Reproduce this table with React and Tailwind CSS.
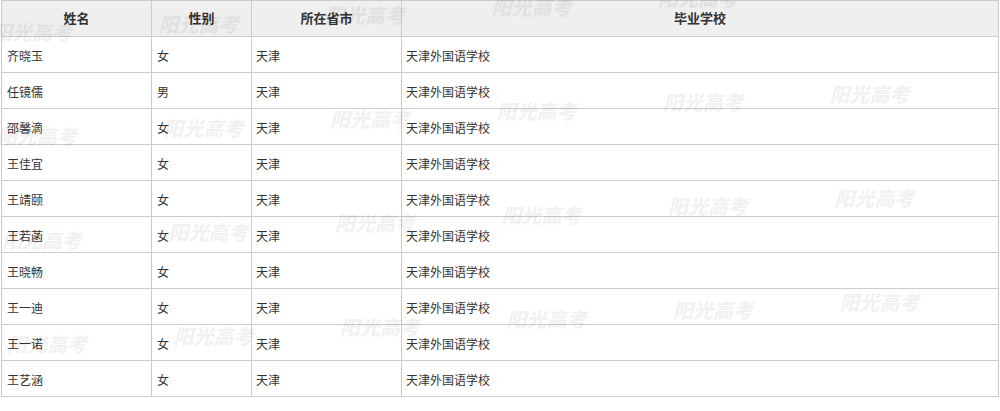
import React from "react";

const rows = [
  ["齐晓玉", "女"],
  ["任镜儒", "男"],
  ["邵馨滴", "女"],
  ["王佳宜", "女"],
  ["王靖颐", "女"],
  ["王若菡", "女"],
  ["王晓畅", "女"],
  ["王一迪", "女"],
  ["王一诺", "女"],
  ["王艺涵", "女"],
];

const marks = [];
for (let r = 0; r < 4; r++) {
  for (let c = 0; c < 6; c++) {
    marks.push({ x: c * 166.5 + r * 5 - 8, y: r * 104 - c * 8.5 + 20 });
  }
}

export default function App() {
  const font = { fontFamily: '"Noto Sans CJK SC", "Noto Sans", sans-serif' };
  return (
    <div className="relative w-[1000px] h-[411px] bg-white overflow-hidden" style={font}>
      <div className="ml-px w-[998px] border-l border-t border-[#cccccc] grid grid-cols-[150px_100px_150px_597px] auto-rows-[36px] text-[12px] text-[#333333]">
        {["姓名", "性别", "所在省市", "毕业学校"].map((h) => (
          <div
            key={h}
            className="bg-[#efefef] border-r border-b border-[#cccccc] flex items-center justify-center pb-[1px] text-[13px] font-bold text-[#333333]"
          >
            {h}
          </div>
        ))}
        {rows.map(([name, sex]) => (
          <React.Fragment key={name}>
            <div className="border-r border-b border-[#cccccc] flex items-center pl-[5px] pt-[3px]">{name}</div>
            <div className="border-r border-b border-[#cccccc] flex items-center pl-[5px] pt-[3px]">{sex}</div>
            <div className="border-r border-b border-[#cccccc] flex items-center pl-[4px] pt-[3px]">天津</div>
            <div className="border-r border-b border-[#cccccc] flex items-center pl-[4px] pt-[3px]">天津外国语学校</div>
          </React.Fragment>
        ))}
      </div>
      {marks.map((m, i) => (
        <div
          key={i}
          className="absolute pointer-events-none select-none text-[20px] leading-[24px] font-black italic text-black/[0.055] blur-[0.4px] whitespace-nowrap"
          style={{ left: m.x, top: m.y, fontFamily: '"Noto Sans CJK SC", serif' }}
        >
          阳光高考
        </div>
      ))}
    </div>
  );
}
